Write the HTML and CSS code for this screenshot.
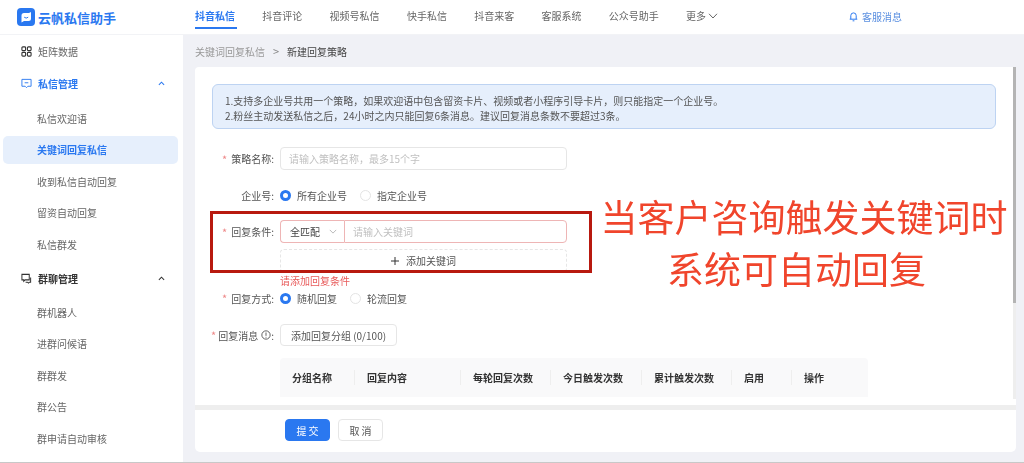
FILE: index.html
```html
<!DOCTYPE html>
<html lang="zh-CN">
<head>
    <meta charset="UTF-8">
    <title>云帆私信助手</title>
    <link rel="stylesheet" href="styles.css">
</head>
<body>
    <div class="app">
        <header class="top-bar">
            <div class="brand">
                <svg class="brand-icon" viewBox="0 0 18 18" width="18" height="18">
                    <rect width="18" height="18" rx="4" fill="#2a78f0"/>
                    <path d="M4.5 7.5 Q4.5 5 7 5 H12 L14 4 V10.5 Q14 13 11.5 13 H7 L4.5 14.5 Z" fill="#fff"/>
                    <path d="M7.2 9.2 Q9.2 11 11.2 9.2" fill="none" stroke="#2a78f0" stroke-width="1"/>
                </svg>
                <span class="brand-name">云帆私信助手</span>
            </div>
            <nav class="top-nav">
                <a class="top-link active">抖音私信</a>
                <a class="top-link">抖音评论</a>
                <a class="top-link">视频号私信</a>
                <a class="top-link">快手私信</a>
                <a class="top-link">抖音来客</a>
                <a class="top-link">客服系统</a>
                <a class="top-link">公众号助手</a>
                <a class="top-link">更多
                    <svg viewBox="0 0 10 6" width="10" height="6"><path d="M1 .8 5 5 9 .8" fill="none" stroke="#666" stroke-width="1"/></svg>
                </a>
            </nav>
            <div class="service-msg">
                <svg viewBox="0 0 10 12" width="9" height="11"><path d="M2 8.8V5a3 3 0 0 1 6 0v3.8M.8 9h8.4M4 10.8h2" fill="none" stroke="#2a78f0" stroke-width="1.1"/></svg>
                <span>客服消息</span>
            </div>
        </header>

        <div class="content">
            <aside class="side-menu">
                <div class="menu-head">
                    <svg viewBox="0 0 12 12" width="11" height="11"><g fill="none" stroke="#333" stroke-width="1.2"><rect x="1" y="1" width="4" height="4" rx="1"/><rect x="7" y="1" width="4" height="4" rx="1"/><rect x="1" y="7" width="4" height="4" rx="1"/><rect x="7" y="7" width="4" height="4" rx="1"/></g></svg>
                    <span class="menu-plain">矩阵数据</span>
                </div>
                <div class="menu-head open">
                    <svg viewBox="0 0 12 12" width="11" height="11"><path d="M1 1.5h10v7.5H7.5L6 10.5 4.5 9H1z M4 5.2h4" fill="none" stroke="#2a78f0" stroke-width="1"/></svg>
                    <span>私信管理</span>
                    <svg class="caret" viewBox="0 0 8 5" width="7" height="5"><path d="M1 4 4 1l3 3" fill="none" stroke="#2a78f0" stroke-width="1.2"/></svg>
                </div>
                <div class="menu-group">
                    <a class="menu-item">私信欢迎语</a>
                    <a class="menu-item active">关键词回复私信</a>
                    <a class="menu-item">收到私信自动回复</a>
                    <a class="menu-item">留资自动回复</a>
                    <a class="menu-item">私信群发</a>
                </div>
                <div class="menu-head dark">
                    <svg viewBox="0 0 12 12" width="11" height="11"><path d="M1 1.5h8v6H4.5L3 9V7.5H1z M10.5 5v5H9l-.8 1L7 10H5" fill="none" stroke="#333" stroke-width="1.1"/></svg>
                    <span>群聊管理</span>
                    <svg class="caret" viewBox="0 0 8 5" width="7" height="5"><path d="M1 4 4 1l3 3" fill="none" stroke="#333" stroke-width="1.2"/></svg>
                </div>
                <div class="menu-group">
                    <a class="menu-item">群机器人</a>
                    <a class="menu-item">进群问候语</a>
                    <a class="menu-item">群群发</a>
                    <a class="menu-item">群公告</a>
                    <a class="menu-item">群申请自动审核</a>
                </div>
            </aside>

            <main class="main-area">
                <div class="crumbs">
                    <span class="crumb-link">关键词回复私信</span>
                    <span class="crumb-sep">&gt;</span>
                    <span class="crumb-now">新建回复策略</span>
                </div>
                <section class="card">
                    <div class="card-body">
                        <div class="notice">
                            <p>1.支持多企业号共用一个策略，如果欢迎语中包含留资卡片、视频或者小程序引导卡片，则只能指定一个企业号。</p>
                            <p>2.粉丝主动发送私信之后，24小时之内只能回复6条消息。建议回复消息条数不要超过3条。</p>
                        </div>

                        <div class="form-row row-name">
                            <label class="form-label required">策略名称:</label>
                            <div class="text-input wide placeholder">请输入策略名称，最多15个字</div>
                        </div>
                        <div class="form-row row-account">
                            <label class="form-label">企业号:</label>
                            <span class="radio checked">所有企业号</span>
                            <span class="radio">指定企业号</span>
                        </div>
                        <div class="form-row row-cond">
                            <label class="form-label required">回复条件:</label>
                            <div class="input-group">
                                <div class="match-select">全匹配
                                    <svg viewBox="0 0 10 6" width="8" height="5"><path d="M1 1 5 5 9 1" fill="none" stroke="#aaa" stroke-width="1"/></svg>
                                </div>
                                <div class="keyword-input placeholder">请输入关键词</div>
                            </div>
                        </div>
                        <div class="add-keyword">
                            <svg viewBox="0 0 8 8" width="8" height="8"><path d="M4 0v8M0 4h8" stroke="#333" stroke-width="1"/></svg>
                            添加关键词
                        </div>
                        <div class="form-error">请添加回复条件</div>
                        <div class="form-row row-mode">
                            <label class="form-label required">回复方式:</label>
                            <span class="radio checked">随机回复</span>
                            <span class="radio">轮流回复</span>
                        </div>
                        <div class="form-row row-msg">
                            <label class="form-label required with-tip">回复消息
                                <svg viewBox="0 0 12 12" width="10" height="10"><circle cx="6" cy="6" r="5" fill="none" stroke="#444" stroke-width="1"/><path d="M6 3v4M6 8.2v1" stroke="#444" stroke-width="1"/></svg>:</label>
                            <button class="plain-btn" type="button">添加回复分组 (0/100)</button>
                        </div>
                        <div class="group-table">
                            <div class="th">分组名称</div>
                            <div class="th">回复内容</div>
                            <div class="th">每轮回复次数</div>
                            <div class="th">今日触发次数</div>
                            <div class="th">累计触发次数</div>
                            <div class="th">启用</div>
                            <div class="th">操作</div>
                        </div>
                        <div class="scroll-thumb"></div>
                    </div>
                    <div class="card-foot">
                        <button class="submit-btn" type="button">提 交</button>
                        <button class="cancel-btn" type="button">取 消</button>
                    </div>
                </section>
            </main>
        </div>

        <div class="mark-box"></div>
        <div class="mark-text">
            <div>当客户咨询触发关键词时</div>
            <div class="mark-line2">系统可自动回复</div>
        </div>
    </div>
</body>
</html>
```

FILE: styles.css
```css
*, *::before, *::after {
    box-sizing: border-box;
}

html, body {
    margin: 0;
    height: 100%;
    overflow: hidden;
}

body {
    font-family: "Noto Sans CJK SC", "Noto Sans", sans-serif;
    font-size: 10px;
    color: #444;
    background-color: #f0f1f6;
}

p {
    margin: 0;
}

.app {
    position: relative;
    height: 463px;
    display: flex;
    flex-direction: column;
    border-bottom: 1px solid #c8c8c8;
    filter: blur(0.3px);
}

/* top bar */
.top-bar {
    height: 35px;
    flex-shrink: 0;
    display: flex;
    align-items: center;
    background-color: #fff;
    border-bottom: 1px solid #f2f3f6;
}

.brand {
    width: 195px;
    padding-left: 17px;
    display: flex;
    align-items: center;
    gap: 3px;
}

.brand-name {
    font-size: 13px;
    font-weight: 700;
    color: #2a78f0;
    white-space: nowrap;
}

.top-nav {
    display: flex;
    gap: 27.3px;
    height: 100%;
}

.top-link {
    position: relative;
    display: flex;
    align-items: center;
    gap: 2px;
    height: 100%;
    padding-bottom: 3px;
    color: #666;
    white-space: nowrap;
}

.top-link.active {
    color: #2a78f0;
    font-weight: 700;
}

.top-link.active::after {
    content: "";
    position: absolute;
    left: 0;
    right: -2px;
    top: 27px;
    height: 2px;
    background-color: #2a78f0;
}

.service-msg {
    margin-left: 131px;
    padding-bottom: 2px;
    display: flex;
    align-items: center;
    gap: 4px;
    color: #5a8fe0;
}

/* side menu */
.content {
    flex: 1;
    display: flex;
    min-height: 0;
}

.side-menu {
    width: 183px;
    flex-shrink: 0;
    background-color: #fff;
}

.menu-head {
    height: 32px;
    padding: 0 17px 0 21px;
    display: flex;
    align-items: center;
    gap: 6px;
    font-weight: 700;
}

.menu-head.open {
    color: #2a78f0;
}

.menu-head.dark {
    height: 30px;
    padding-top: 1px;
    color: #333;
}

.menu-plain {
    font-weight: 400;
    color: #666;
}

.caret {
    margin-left: auto;
    margin-right: 1px;
}

.menu-group {
    padding: 5px 0;
    display: flex;
    flex-direction: column;
    gap: 3.5px;
}

.menu-item {
    display: flex;
    align-items: center;
    height: 28px;
    margin: 0 5px 0 3px;
    padding-left: 34px;
    border-radius: 5px;
    color: #666;
}

.menu-item.active {
    background-color: #e6effc;
    color: #2a78f0;
    font-weight: 700;
}

/* main */
.main-area {
    flex: 1;
    min-width: 0;
    padding: 0 8px 10px 12px;
    display: flex;
    flex-direction: column;
}

.crumbs {
    height: 32px;
    flex-shrink: 0;
    display: flex;
    align-items: center;
    gap: 8px;
}

.crumb-link {
    color: #999;
}

.crumb-sep {
    color: #888;
    font-size: 11px;
}

.crumb-now {
    color: #444;
}

.card {
    flex: 1;
    min-height: 0;
    display: flex;
    flex-direction: column;
    background-color: #fff;
    border-radius: 4px 4px 5px 5px;
}

.card-body {
    position: relative;
    height: 338px;
    flex-shrink: 0;
    padding: 17px 0 0 17px;
    overflow: hidden;
}

.scroll-thumb {
    position: absolute;
    top: 0;
    right: 0;
    width: 3px;
    height: 332px;
    background: linear-gradient(#b4b4b4 0, #b4b4b4 236px, #eee 236px);
}

.notice {
    width: 784px;
    height: 45px;
    padding: 8px 12px;
    background-color: #e6effc;
    border: 1px solid #bdd3f2;
    border-radius: 6px;
    line-height: 15px;
    color: #555;
}

.form-row {
    display: flex;
    align-items: center;
    margin-left: -17px;
}

.form-label {
    width: 79px;
    margin-right: 6px;
    flex-shrink: 0;
    display: flex;
    align-items: center;
    justify-content: flex-end;
    gap: 2px;
    color: #555;
    white-space: nowrap;
}

.form-label.required::before {
    content: "*";
    color: #ee8888;
    font-size: 11px;
    margin-right: 2px;
}

.form-label.with-tip {
    gap: 0;
}

.form-label.with-tip svg {
    margin-left: 3px;
}

.placeholder {
    color: #c0c0c0;
}

.text-input {
    height: 23px;
    padding-left: 8px;
    display: flex;
    align-items: center;
    border: 1px solid #e6e6e6;
    border-radius: 4px;
}

.text-input.wide {
    width: 287px;
}

.row-name {
    margin-top: 18px;
}

.row-account {
    margin-top: 14px;
    height: 23px;
}

.row-cond {
    margin-top: 13px;
}

.row-mode {
    height: 20px;
}

.row-msg {
    margin-top: 16px;
}

.radio {
    display: flex;
    align-items: center;
    gap: 6px;
    margin-right: 13px;
    color: #555;
}

.radio::before {
    content: "";
    width: 11px;
    height: 11px;
    border: 1px solid #e4e4e4;
    border-radius: 50%;
    background-color: #fff;
}

.radio.checked::before {
    border: 3px solid #2a78f0;
}

.input-group {
    width: 287px;
    height: 23px;
    display: flex;
}

.match-select {
    width: 64px;
    padding: 0 7px 0 9px;
    display: flex;
    align-items: center;
    justify-content: space-between;
    border: 1px solid #eeb5b5;
    border-right: 0;
    border-radius: 4px 0 0 4px;
    color: #444;
}

.keyword-input {
    flex: 1;
    padding-left: 8px;
    display: flex;
    align-items: center;
    border: 1px solid #eeb5b5;
    border-radius: 0 4px 4px 0;
}

.add-keyword {
    width: 287px;
    height: 23px;
    margin: 6px 0 0 68px;
    display: flex;
    align-items: center;
    justify-content: center;
    gap: 7px;
    border: 1px dashed #e6e6e6;
    border-radius: 4px;
    color: #555;
}

.form-error {
    height: 15px;
    margin: 1px 0 0 68px;
    line-height: 15px;
    color: #e85a5a;
}

.plain-btn {
    height: 22px;
    width: 117px;
    padding: 0;
    background-color: #fff;
    border: 1px solid #e6e6e6;
    border-radius: 4px;
    font: inherit;
    color: #555;
}

.group-table {
    width: 588px;
    height: 39px;
    margin: 12px 0 0 68px;
    display: grid;
    grid-template-columns: 75px 106px 90px 91px 90px 60px 76px;
    align-items: center;
    background-color: #f9f9fa;
    border-radius: 4px 4px 0 0;
}

.th {
    position: relative;
    padding-left: 12px;
    font-weight: 700;
    color: #333;
    white-space: nowrap;
}

.th:not(:last-child)::after {
    content: "";
    position: absolute;
    right: 0;
    top: 0;
    width: 1px;
    height: 100%;
    background-color: #eee;
}

.card-foot {
    flex: 1;
    padding: 9px 0 0 90px;
    display: flex;
    align-items: flex-start;
    gap: 8px;
    border-top: 5px solid #eee;
}

.submit-btn, .cancel-btn {
    width: 45px;
    height: 22px;
    padding: 0;
    border-radius: 4px;
    font: inherit;
}

.submit-btn {
    background-color: #2a78f0;
    border: 1px solid #2a78f0;
    color: #fff;
}

.cancel-btn {
    background-color: #fff;
    border: 1px solid #e6e6e6;
    color: #555;
}

/* annotation laid over the screenshot */
.mark-box {
    position: absolute;
    left: 210px;
    top: 211px;
    width: 382px;
    height: 62px;
    border: 3px solid #b8190f;
}

.mark-text {
    position: absolute;
    left: 598px;
    top: 190px;
    width: 412px;
    text-align: center;
    font-size: 37px;
    line-height: 52px;
    color: #f0452c;
    white-space: nowrap;
}

.mark-line2 {
    padding-right: 15px;
}
```
